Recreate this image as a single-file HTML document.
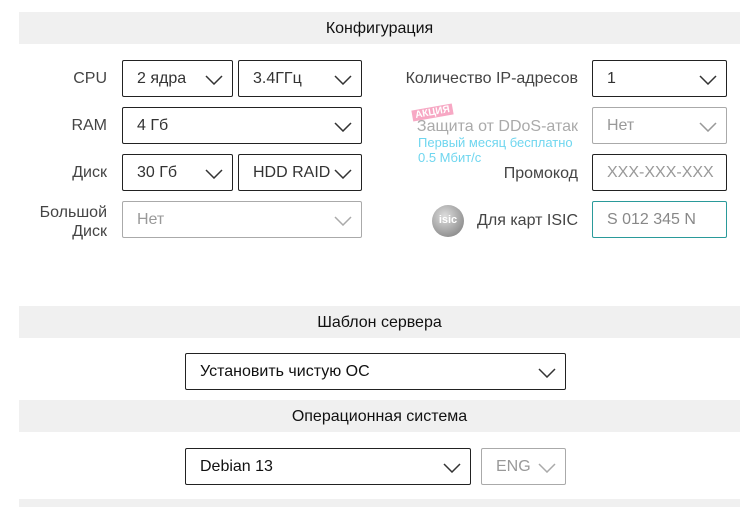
<!DOCTYPE html><html><head><meta charset="utf-8"><style>
html,body{margin:0;overflow:hidden}
body{width:756px;height:507px;background:#fff;position:relative;font-family:"Liberation Sans",Arial,sans-serif;color:#222}
.bar{position:absolute;left:19px;width:721px;height:32px;background:#f0f0f0;font-size:16px;line-height:33px;text-align:center;color:#111}
.s{position:absolute;box-sizing:border-box;border:1px solid #222;border-radius:2px;height:37px;font-size:16px;line-height:35px;padding-left:14px;color:#333}
.s.g{border-color:#aaa;color:#999}
.s svg{position:absolute;right:9px;top:14px}
.l{position:absolute;font-size:16px;color:#444;text-align:right}
</style></head><body>
<div class="bar" style="top:12px">Конфигурация</div>
<div class="l" style="right:649px;top:70px">CPU</div>
<div class="l" style="right:649px;top:117px">RAM</div>
<div class="l" style="right:649px;top:164px">Диск</div>
<div class="l" style="right:649px;top:203px;line-height:19px">Большой<br>Диск</div>
<div class="s" style="left:122px;top:60px;width:111px">2 ядра<svg width="18" height="10"><path d="M1 1L9 9L17 1" fill="none" stroke="#333" stroke-width="1.5"/></svg></div>
<div class="s" style="left:238px;top:60px;width:124px">3.4ГГц<svg width="18" height="10"><path d="M1 1L9 9L17 1" fill="none" stroke="#333" stroke-width="1.5"/></svg></div>
<div class="s" style="left:122px;top:107px;width:240px">4 Гб<svg width="18" height="10"><path d="M1 1L9 9L17 1" fill="none" stroke="#333" stroke-width="1.5"/></svg></div>
<div class="s" style="left:122px;top:154px;width:111px">30 Гб<svg width="18" height="10"><path d="M1 1L9 9L17 1" fill="none" stroke="#333" stroke-width="1.5"/></svg></div>
<div class="s" style="left:238px;top:154px;width:124px">HDD RAID<svg width="18" height="10"><path d="M1 1L9 9L17 1" fill="none" stroke="#333" stroke-width="1.5"/></svg></div>
<div class="s g" style="left:122px;top:201px;width:240px">Нет<svg width="18" height="10"><path d="M1 1L9 9L17 1" fill="none" stroke="#aaa" stroke-width="1.5"/></svg></div>

<div class="l" style="right:178px;top:70px">Количество IP-адресов</div>
<div style="position:absolute;left:412px;top:107px;background:#f7a8c4;color:#fff;font-size:10px;font-weight:bold;padding:0 3px;line-height:11px;transform:rotate(-10deg)">АКЦИЯ</div>
<div class="l" style="right:178px;top:118px;color:#aaa">Защита от DDoS-атак</div>
<div style="position:absolute;left:418px;top:135px;font-size:13px;color:#6fd6ef;line-height:15px">Первый месяц бесплатно<br>0.5 Мбит/с</div>
<div class="l" style="right:178px;top:165px">Промокод</div>
<div style="position:absolute;left:432px;top:205px;width:32px;height:32px;border-radius:50%;background:radial-gradient(circle at 40% 35%,#ddd,#777);color:#fff;font-size:11px;font-weight:bold;text-align:center;line-height:30px">isic</div>
<div class="l" style="right:178px;top:212px">Для карт ISIC</div>
<div class="s" style="left:592px;top:60px;width:135px">1<svg width="18" height="10"><path d="M1 1L9 9L17 1" fill="none" stroke="#333" stroke-width="1.5"/></svg></div>
<div class="s g" style="left:592px;top:107px;width:135px">Нет<svg width="18" height="10"><path d="M1 1L9 9L17 1" fill="none" stroke="#999" stroke-width="1.5"/></svg></div>
<div class="s" style="left:592px;top:154px;width:135px;color:#999">XXX-XXX-XXX</div>
<div class="s" style="left:592px;top:201px;width:135px;border-color:#2a9a9a;color:#888">S 012 345 N</div>

<div class="bar" style="top:306px">Шаблон сервера</div>
<div class="s" style="left:185px;top:353px;width:381px;color:#111">Установить чистую ОС<svg width="18" height="10"><path d="M1 1L9 9L17 1" fill="none" stroke="#333" stroke-width="1.5"/></svg></div>
<div class="bar" style="top:400px">Операционная система</div>
<div class="s" style="left:185px;top:448px;width:286px;color:#111">Debian 13<svg width="18" height="10"><path d="M1 1L9 9L17 1" fill="none" stroke="#333" stroke-width="1.5"/></svg></div>
<div class="s g" style="left:481px;top:448px;width:85px">ENG<svg width="18" height="10"><path d="M1 1L9 9L17 1" fill="none" stroke="#aaa" stroke-width="1.5"/></svg></div>
<div class="bar" style="top:499px;height:8px"></div>
</body></html>
